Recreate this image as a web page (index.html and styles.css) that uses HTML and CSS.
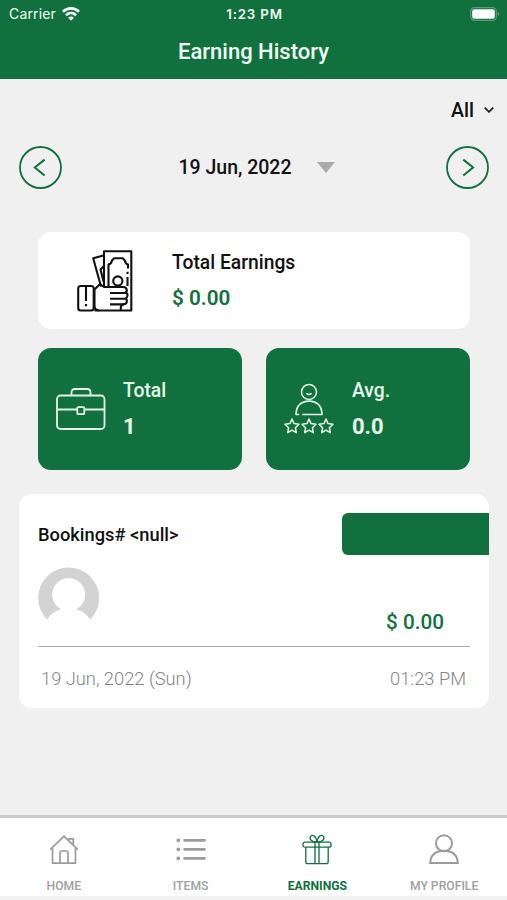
FILE: index.html
```html
<!DOCTYPE html>
<html lang="en">
<head>
<meta charset="utf-8">
<title>Earning History</title>
<link rel="stylesheet" href="styles.css">
</head>
<body>
<div class="app">
  <header class="header">
    <div class="status">
      <div class="carrier"><span>Carrier</span>
        <svg width="18" height="14" viewBox="0 0 18 14" fill="none" stroke="#fff" stroke-width="2.6"><path d="M.9 4.7C5.7.2 12.3.2 17.1 4.7"/><path d="M3.9 8.2c3-2.8 7.2-2.8 10.2 0"/><path d="M9 13.7 6.1 10.8c1.7-1.6 4.1-1.6 5.8 0z" fill="#fff" stroke="none"/></svg>
      </div>
      <span class="clock">1:23 PM</span>
      <svg class="battery" width="30" height="14" viewBox="0 0 30 14"><rect x=".7" y=".7" width="25.6" height="12.6" rx="3.6" fill="none" stroke="#5c9b75" stroke-width="1.2"/><rect x="2.2" y="2.2" width="22.6" height="9.6" rx="2" fill="#fff"/><path d="M27.6 4.6q1.8 1 1.8 2.4t-1.8 2.4z" fill="#5c9b75"/></svg>
    </div>
    <h1 class="title">Earning History</h1>
  </header>

  <main class="content">
    <div class="filter"><span>All</span>
      <svg width="10" height="6" viewBox="0 0 10 6" fill="none" stroke="#222" stroke-width="1.7"><path d="M.7.7 5 4.9 9.3.7"/></svg>
    </div>

    <div class="date-row">
      <svg width="43" height="43" viewBox="0 0 43 43" fill="none" stroke="#10703e" stroke-width="1.8"><circle cx="21.5" cy="21.5" r="20.5"/><path d="M25.6 13.6 15.8 21.5l9.8 8" stroke-width="2"/></svg>
      <div class="date"><span>19 Jun, 2022</span>
        <svg width="18" height="11" viewBox="0 0 18 11"><path d="M0 0h18L9 11z" fill="#aaa"/></svg>
      </div>
      <svg width="43" height="43" viewBox="0 0 43 43" fill="none" stroke="#10703e" stroke-width="1.8"><circle cx="21.5" cy="21.5" r="20.5"/><path d="M17.3 13.6 27.1 21.5l-9.8 8" stroke-width="2"/></svg>
    </div>

    <section class="earnings">
      <svg width="56" height="62" viewBox="0 0 56 62" fill="none" stroke="#111" stroke-width="2.1" stroke-linejoin="round">
        <path d="M27 37V1.200h27.300v59.300H17.500"/>
        <path d="M26.500 5.500 16.200 8.200 24 36.500M27 16l-3.500 3.500 3 12"/>
        <path d="M31.500 36.500V14.500q3-.6 3.300-3.700L37 8.300h9L48 10.800q.5 3 3 3.700v4M50.500 27v9M50.500 21.700v2.200"/>
        <circle cx="40.800" cy="31" r="4.600"/>
        <path d="M17.500 39.500 23 34l4 3h19q3.500 0 3.800 3 .2 2-1.500 2.400 2.500.8 2.200 3.200t-2.200 3q1.800.6 1.500 3t-3 2.600q-3 .4-3 3.500v2.500"/>
        <path d="M33 43h16M33 48.800h15M33 54.400h14M17.500 40v16q0 4 4.500 4.500"/>
        <rect x="1.200" y="36" width="15.500" height="24.500" rx="2.500"/>
        <path d="M9 36v15M9 54v2.200"/>
      </svg>
      <div class="figures"><span class="label">Total Earnings</span><span class="amount">$ 0.00</span></div>
    </section>

    <div class="stats">
      <section class="stat total">
        <svg width="50" height="43" viewBox="0 0 50 43" fill="none" stroke="#e6f8e8" stroke-width="1.8"><rect x="1" y="7.500" width="47.500" height="33.500" rx="3.500"/><path d="M15.500 7.500V4.500Q15.500 1 19 1h12q3.500 0 3.500 3.500v3M1 21.500h20M28.500 21.500H49"/><rect x="21.300" y="19.200" width="7" height="7" rx="1"/></svg>
        <div class="figures"><span class="label">Total</span><span class="value">1</span></div>
      </section>
      <section class="stat average">
        <svg width="50" height="52" viewBox="0 0 50 52" fill="none" stroke="#e6f8e8" stroke-width="1.500" stroke-linejoin="round"><circle cx="25" cy="9" r="7.500"/><path d="M22.400 10.300q2.600 2.500 5.200 0M15.200 31.500H12V30q1-11.500 13-12Q37 18.500 38 30v1.500H18.300"/>
          <g id="stars"><path id="star" d="m8 36 2 4.600 5 .6-3.600 3.500.9 5L8 47.200l-4.300 2.500.9-5L1 41.200l5-.6z"/><use href="#star" x="17"/><use href="#star" x="34"/></g></svg>
        <div class="figures"><span class="label">Avg.</span><span class="value">0.0</span></div>
      </section>
    </div>

    <article class="booking">
      <div class="booking-head"><h2>Bookings# &lt;null&gt;</h2><div class="badge"></div></div>
      <div class="booking-body">
        <svg width="61" height="61" viewBox="0 0 61 61"><path fill="#d3d3d3" d="M9 52.500A30.500 30.500 0 1 1 52.300 52.500Q46.500 44.500 38 42.300A16.500 16.500 0 1 0 23.300 42.300Q14.500 44.500 9 52.500z"/></svg>
        <span class="price">$ 0.00</span>
      </div>
      <div class="booking-foot"><span class="day">19 Jun, 2022 (Sun)</span><span class="time">01:23 PM</span></div>
    </article>
  </main>

  <nav class="tabs">
    <a class="tab home"><svg width="30" height="32" viewBox="0 0 30 32" fill="none" stroke="#9b9b9b" stroke-width="1.700"><path d="M1.200 15.500 15 2.300l13.800 13.200M3.500 14v15.200h23V14M19.800 6.500V4.800h4.500V11M11 29V18.500q0-1.500 1.500-1.500h5q1.500 0 1.500 1.500V29"/></svg><span>HOME</span></a>
    <a class="tab items"><svg width="30" height="32" viewBox="0 0 30 32" fill="none" stroke="#9b9b9b" stroke-width="2.700" stroke-linecap="round"><path d="M8.500 6.300h20M8.500 15.300h20M8.500 24.300h20"/><path stroke-width="3.800" d="M2.300 6.300h.01M2.300 15.300h.01M2.300 24.300h.01"/></svg><span>ITEMS</span></a>
    <a class="tab active"><svg width="30" height="32" viewBox="0 0 30 32" fill="none" stroke="#10703e" stroke-width="1.300"><rect x="1" y="8.200" width="28" height="5" rx="2"/><path d="M3.800 13.200v14.500q0 2 2 2h18.400q2 0 2-2V13.200M13 8.200v21.500M17 8.200v21.500M14.800 8C9.500 8 7 5 8.500 2.500s6-.8 6.300 5.500M15.200 8c5.300 0 7.800-3 6.300-5.500s-6-.8-6.300 5.500"/></svg><span>EARNINGS</span></a>
    <a class="tab profile"><svg width="30" height="32" viewBox="0 0 30 32" fill="none" stroke="#9b9b9b" stroke-width="2"><circle cx="15" cy="9.300" r="8"/><path d="M1.200 29q.5-12 13.800-12.300Q28.300 17 28.800 29z"/></svg><span>MY PROFILE</span></a>
  </nav>
</div>
</body>
</html>
```
FILE: styles.css
```css
* { box-sizing: border-box; }
body { margin: 0; background: #f0f0f0; color: #111; font-family: Roboto, sans-serif; font-weight: 500; }
svg { display: block; flex: none; }
h1, h2 { margin: 0; font-weight: 500; }
.app { width: 507px; height: 900px; display: flex; flex-direction: column; overflow: hidden; white-space: nowrap; }

.header { height: 79px; background: #10703e; color: #f3fff5; }
.status { height: 27px; padding: 0 7px 0 9px; display: grid; grid-template-columns: 1fr auto 1fr; align-items: center; }
.carrier { display: flex; align-items: center; gap: 6px; font: 400 14px/20px Inter, sans-serif; }
.carrier span { width: 47px; letter-spacing: .15px; }
.clock { font: 600 13.300px/20px Inter, sans-serif; letter-spacing: .8px; }
.battery { justify-self: end; }
.title { margin-top: 10px; text-align: center; font-size: 22px; line-height: 30px; }

.content { flex: 1; }
.filter { height: 32px; margin-top: 15px; padding-right: 13px; display: flex; align-items: center; justify-content: flex-end; gap: 10px; font-size: 19.600px; }
.date-row { margin-top: 20px; padding: 0 18px 0 19px; display: flex; align-items: center; justify-content: space-between; }
.date { display: flex; align-items: center; gap: 25px; font-size: 19.500px; margin-left: 5px; }

.earnings { height: 97px; margin: 43px 37px 0 38px; padding-left: 39px; display: flex; align-items: center; gap: 39px; background: #fff; border-radius: 13px; }
.figures { display: flex; flex-direction: column; }
.label { font-size: 19.300px; line-height: 26px; }
.amount, .price { color: #10703e; font-size: 20.700px; }
.amount { line-height: 26px; margin-top: 9px; font-weight: 600; }

.stats { margin: 19px 37px 0 38px; display: grid; grid-template-columns: 1fr 1fr; gap: 24px; }
.stat { height: 122px; padding-left: 18px; display: flex; align-items: center; gap: 18px; background: #10703e; color: #e9fbeb; border-radius: 13px; }
.total { gap: 17px; }
.value { margin-top: 9px; font-size: 22px; line-height: 28px; font-weight: 700; }

.booking { height: 214px; margin: 24px 18px 0 19px; padding: 19px 0 0 19px; background: #fff; border-radius: 13px; }
.booking-head { display: flex; justify-content: space-between; align-items: center; }
.booking-head h2 { font-size: 18.300px; }
.badge { width: 147px; height: 42px; background: #10703e; border-radius: 6px 0 0 6px; }
.booking-body { height: 92px; margin-right: 19px; padding: 12px 26px 0 0; display: flex; justify-content: space-between; border-bottom: 1px solid #aaa; }
.price { margin-top: 42px; line-height: 26px; }
.booking-foot { margin-right: 19px; padding: 19px 4px 0 3px; display: flex; justify-content: space-between; color: #858585; font-size: 18.300px; line-height: 26px; font-weight: 300; }

.tabs { height: 85px; border-top: 3px solid #cbcbcb; border-bottom: 4px solid #f2f2f2; background: #fff; display: grid; grid-template-columns: repeat(4, 1fr); }
.tab { display: flex; flex-direction: column; align-items: center; padding: 16px 0 0 1px; color: #a0a0a0; font-size: 12.200px; line-height: 16px; }
.tab span { margin-top: 12px; }
.active { color: #10703e; font-weight: 700; }
```
